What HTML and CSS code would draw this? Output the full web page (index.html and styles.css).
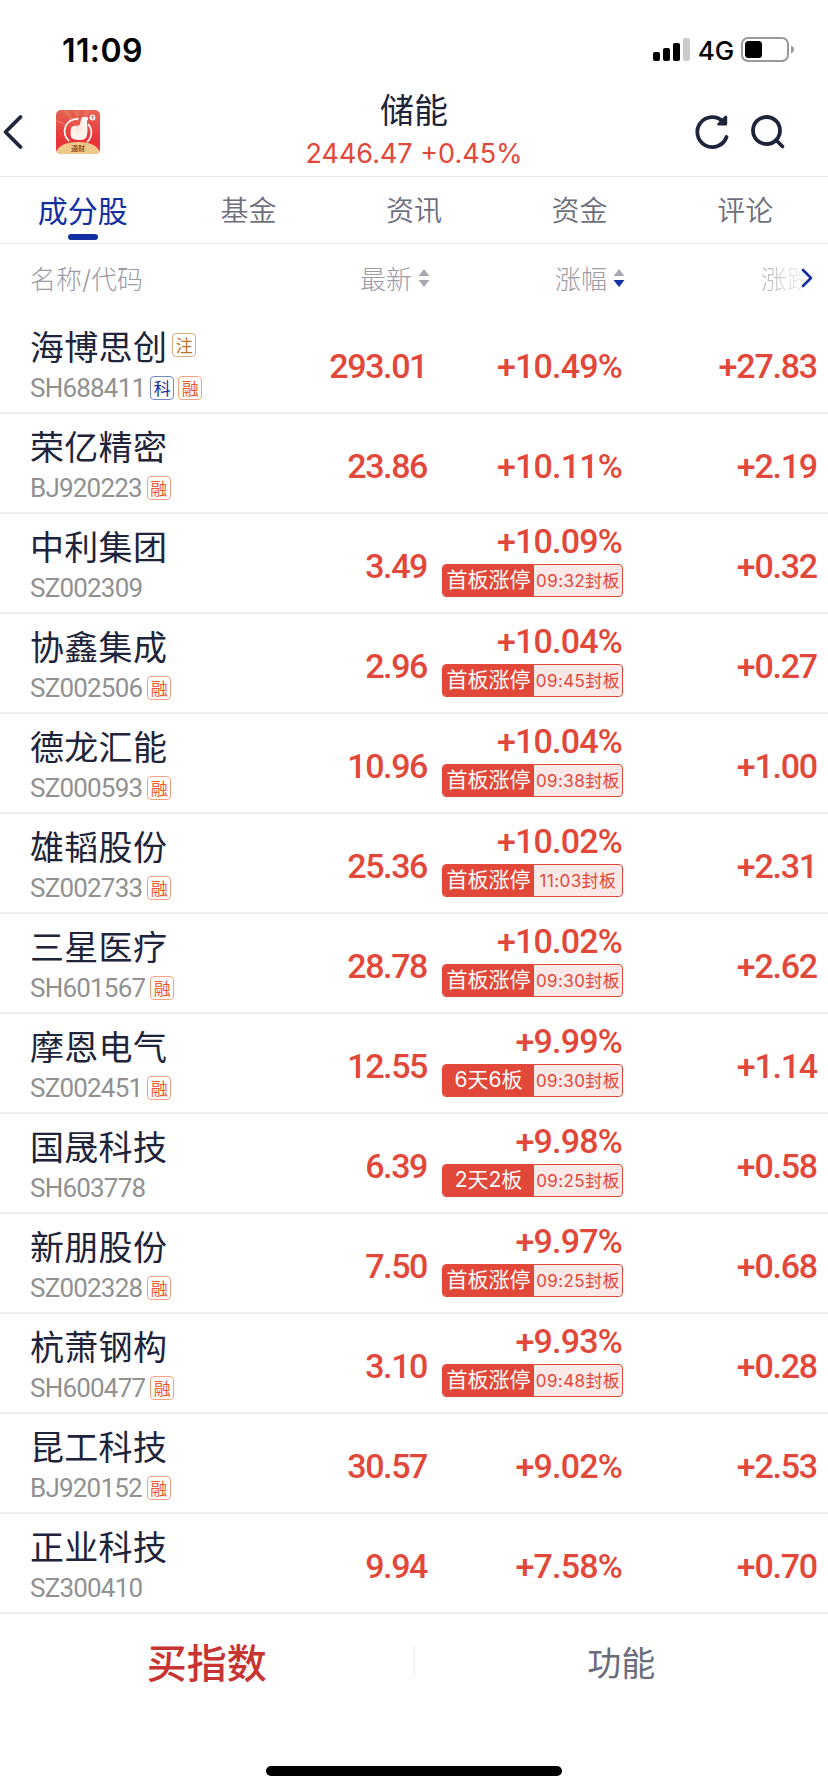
FILE: index.html
```html
<!DOCTYPE html>
<html lang="zh-CN">
<head>
  <meta charset="UTF-8">
  <title>储能</title>
  <link rel="stylesheet" href="styles.css">
</head>
<body>

<div class="status-bar">
  <span class="clock">11:09</span>
  <div class="status-icons">
    <svg width="38" height="24" viewBox="0 0 38 24">
      <rect x="0" y="14" width="7" height="9" rx="2"/>
      <rect x="10" y="10" width="7" height="13" rx="2"/>
      <rect x="20" y="5" width="7" height="18" rx="2"/>
      <rect x="30" y="0" width="7" height="23" rx="2" fill="#ccc"/>
    </svg>
    <span class="network">4G</span>
    <svg width="54" height="26" viewBox="0 0 54 26">
      <rect x="1" y="1" width="46" height="23" rx="6" fill="none" stroke="#999" stroke-width="2"/>
      <rect x="4" y="4" width="17" height="17" rx="3.5"/>
      <path d="M50 8.500c4 1.500 4 6.500 0 8z" fill="#999"/>
    </svg>
  </div>
</div>

<div class="header">
  <div class="header-left">
    <svg class="back" width="26" height="36" viewBox="0 0 26 36">
      <path d="M20.500 3L5.500 18l15 15" fill="none" stroke="#20243a" stroke-width="3.800" stroke-linecap="round" stroke-linejoin="round"/>
    </svg>
    <svg class="logo" width="44" height="44" viewBox="0 0 44 44">
      <defs>
        <linearGradient id="red" x1="0" y1="0" x2="0" y2="1">
          <stop offset="0" stop-color="#e66354"/>
          <stop offset=".7" stop-color="#e93438"/>
        </linearGradient>
        <radialGradient id="hand">
          <stop offset="0" stop-color="#fde6da"/>
          <stop offset="1" stop-color="#fffaf6"/>
        </radialGradient>
        <clipPath id="round"><rect width="44" height="44" rx="5"/></clipPath>
      </defs>
      <g clip-path="url(#round)">
        <rect width="44" height="44" fill="url(#red)"/>
        <path d="M22 20L7 0h5zM22 20L19 0h4zM22 20L30 0h5zM22 20L0 9v3z" fill="#f0866f" opacity=".45"/>
        <path d="M22.500 9A12.500 12.500 0 0 0 13 31M32 14a12.500 12.500 0 0 1-1 18" fill="none" stroke="#fff" stroke-width="1.700"/>
        <path d="M15 18q1-2 4-2.200h3.500q2-1.500 2.200-4.800.3-3.800 3.300-3.900 3-.3 4.300.5 0 1.800-1.300 3.400 0 2.400.2 4.500 1 6-.6 11-1.500 3.500-6.600 3.500-6 0-8.500-2.200-1.200-2-.9-5z" fill="url(#hand)"/>
        <circle cx="36.500" cy="7.500" r="2.900" fill="#fff"/>
        <path d="M36.500 9.300V6M35.200 7l1.300-1.400L37.800 7" stroke="#e8504a" stroke-width=".8" fill="none"/>
        <path d="M0 44q2-12 22-12t22 12z" fill="#eec98a"/>
        <text x="22" y="41" text-anchor="middle" class="logo-text">通财</text>
      </g>
    </svg>
  </div>
  <div class="header-title">
    <div class="title">储能</div>
    <div class="quote">2446.47 +0.45%</div>
  </div>
  <div class="header-right">
    <svg width="38" height="38" viewBox="0 0 38 38" fill="none" stroke="#20243a" stroke-width="3.800" stroke-linecap="round" stroke-linejoin="round">
      <path d="M33.500 24A15 15 0 1 1 30 8.500"/>
      <path d="M32.800 4v7.200h-7.200z" stroke-width="2.800" fill="#20243a"/>
    </svg>
    <svg width="38" height="38" viewBox="0 0 38 38" fill="none" stroke="#20243a" stroke-width="3.800" stroke-linecap="round">
      <circle cx="17.500" cy="17.500" r="13.500"/>
      <path d="M27 27l6.500 6.500"/>
    </svg>
  </div>
</div>

<div class="tabs">
  <div class="tab active">成分股</div>
  <div class="tab">基金</div>
  <div class="tab">资讯</div>
  <div class="tab">资金</div>
  <div class="tab">评论</div>
</div>

<div class="table-head">
  <div class="th-name">名称/代码</div>
  <div class="th">最新
    <svg width="12" height="18" viewBox="0 0 12 18"><path d="M6 0l5.500 7H.5z" fill="#a9a9b1"/><path d="M6 18l5.500-7H.5z" fill="#a9a9b1"/></svg>
  </div>
  <div class="th">涨幅
    <svg width="12" height="18" viewBox="0 0 12 18"><path d="M6 0l5.500 7H.5z" fill="#a9a9b1"/><path d="M6 18l5.500-7H.5z" fill="#142fa2"/></svg>
  </div>
  <div class="th th-last"><span class="fade">涨跌</span>
    <svg class="more" width="14" height="22" viewBox="0 0 14 22"><path d="M3 3l8 8-8 8" fill="none" stroke="#142fa2" stroke-width="2.600" stroke-linecap="round" stroke-linejoin="round"/></svg>
  </div>
</div>

<div class="list">
  <div class="row">
    <div class="stock">
      <div class="name">海博思创<span class="tag gold">注</span></div>
      <div class="code">SH688411<span class="tag blue">科</span><span class="tag">融</span></div>
    </div>
    <div class="num price">293.01</div>
    <div class="num">+10.49%</div>
    <div class="num net">+27.83</div>
  </div>
  <div class="row">
    <div class="stock">
      <div class="name">荣亿精密</div>
      <div class="code">BJ920223<span class="tag">融</span></div>
    </div>
    <div class="num price">23.86</div>
    <div class="num">+10.11%</div>
    <div class="num net">+2.19</div>
  </div>
  <div class="row">
    <div class="stock">
      <div class="name">中利集团</div>
      <div class="code">SZ002309</div>
    </div>
    <div class="num price">3.49</div>
    <div class="num">+10.09%<div class="limit"><b>首板涨停</b><i>09:32封板</i></div></div>
    <div class="num net">+0.32</div>
  </div>
  <div class="row">
    <div class="stock">
      <div class="name">协鑫集成</div>
      <div class="code">SZ002506<span class="tag">融</span></div>
    </div>
    <div class="num price">2.96</div>
    <div class="num">+10.04%<div class="limit"><b>首板涨停</b><i>09:45封板</i></div></div>
    <div class="num net">+0.27</div>
  </div>
  <div class="row">
    <div class="stock">
      <div class="name">德龙汇能</div>
      <div class="code">SZ000593<span class="tag">融</span></div>
    </div>
    <div class="num price">10.96</div>
    <div class="num">+10.04%<div class="limit"><b>首板涨停</b><i>09:38封板</i></div></div>
    <div class="num net">+1.00</div>
  </div>
  <div class="row">
    <div class="stock">
      <div class="name">雄韬股份</div>
      <div class="code">SZ002733<span class="tag">融</span></div>
    </div>
    <div class="num price">25.36</div>
    <div class="num">+10.02%<div class="limit"><b>首板涨停</b><i>11:03封板</i></div></div>
    <div class="num net">+2.31</div>
  </div>
  <div class="row">
    <div class="stock">
      <div class="name">三星医疗</div>
      <div class="code">SH601567<span class="tag">融</span></div>
    </div>
    <div class="num price">28.78</div>
    <div class="num">+10.02%<div class="limit"><b>首板涨停</b><i>09:30封板</i></div></div>
    <div class="num net">+2.62</div>
  </div>
  <div class="row">
    <div class="stock">
      <div class="name">摩恩电气</div>
      <div class="code">SZ002451<span class="tag">融</span></div>
    </div>
    <div class="num price">12.55</div>
    <div class="num">+9.99%<div class="limit"><b>6天6板</b><i>09:30封板</i></div></div>
    <div class="num net">+1.14</div>
  </div>
  <div class="row">
    <div class="stock">
      <div class="name">国晟科技</div>
      <div class="code">SH603778</div>
    </div>
    <div class="num price">6.39</div>
    <div class="num">+9.98%<div class="limit"><b>2天2板</b><i>09:25封板</i></div></div>
    <div class="num net">+0.58</div>
  </div>
  <div class="row">
    <div class="stock">
      <div class="name">新朋股份</div>
      <div class="code">SZ002328<span class="tag">融</span></div>
    </div>
    <div class="num price">7.50</div>
    <div class="num">+9.97%<div class="limit"><b>首板涨停</b><i>09:25封板</i></div></div>
    <div class="num net">+0.68</div>
  </div>
  <div class="row">
    <div class="stock">
      <div class="name">杭萧钢构</div>
      <div class="code">SH600477<span class="tag">融</span></div>
    </div>
    <div class="num price">3.10</div>
    <div class="num">+9.93%<div class="limit"><b>首板涨停</b><i>09:48封板</i></div></div>
    <div class="num net">+0.28</div>
  </div>
  <div class="row">
    <div class="stock">
      <div class="name">昆工科技</div>
      <div class="code">BJ920152<span class="tag">融</span></div>
    </div>
    <div class="num price">30.57</div>
    <div class="num">+9.02%</div>
    <div class="num net">+2.53</div>
  </div>
  <div class="row">
    <div class="stock">
      <div class="name">正业科技</div>
      <div class="code">SZ300410</div>
    </div>
    <div class="num price">9.94</div>
    <div class="num">+7.58%</div>
    <div class="num net">+0.70</div>
  </div>
</div>

<div class="footer">
  <div class="buy">买指数</div>
  <div class="divider"></div>
  <div class="func">功能</div>
</div>
<div class="home-bar"></div>

</body>
</html>
```
FILE: styles.css
```css
* {
  box-sizing: border-box;
}
body {
  margin: 0;
  width: 828px;
  height: 1792px;
  background: #fff;
  color: #20243a;
  font-family: Inter, "Noto Sans CJK SC", sans-serif;
  overflow: hidden;
}
svg {
  display: block;
  flex: none;
}

/* 状态栏 */
.status-bar {
  height: 88px;
  padding: 12px 33px 0 62px;
  display: flex;
  justify-content: space-between;
  align-items: center;
  color: #000;
}
.clock {
  font-size: 32px;
  font-weight: 600;
  letter-spacing: .4px;
}
.status-icons {
  display: flex;
  align-items: center;
}
.network {
  width: 50px;
  text-align: center;
  font-size: 26px;
  font-weight: 500;
}

/* 标题 */
.header {
  height: 89px;
  display: grid;
  grid-template-columns: 1fr 300px 1fr;
  align-items: center;
  border-bottom: 1px solid #e8e8ea;
}
.header-left, .header-right {
  display: flex;
  align-items: center;
}
.header-left {
  gap: 30px;
}
.header-right {
  justify-content: flex-end;
  gap: 18px;
  padding-right: 41px;
}
.logo-text {
  font-size: 7px;
  font-weight: 700;
  fill: #94572b;
}
.header-title {
  text-align: center;
}
.title {
  font-size: 34px;
  line-height: 44px;
}
.quote {
  font-size: 27px;
  line-height: 42px;
  color: #e2483a;
}

/* 标签页 */
.tabs {
  display: flex;
  height: 67px;
  border-bottom: 1px solid #e8e8ea;
}
.tab {
  flex: 1;
  text-align: center;
  font-size: 28px;
  line-height: 68px;
  color: #6d6f7e;
  font-weight: 350;
}
.tab.active {
  font-size: 30px;
  font-weight: 400;
  color: #142fa2;
  position: relative;
}
.tab.active::after {
  content: "";
  position: absolute;
  left: 68px;
  bottom: 3px;
  width: 30px;
  height: 6px;
  border-radius: 3px;
  background: #142fa2;
}

/* 表头 */
.table-head, .row {
  display: grid;
  grid-template-columns: 201px 195px 195px 195px;
  padding-left: 31px;
}
.table-head {
  height: 70px;
  padding-bottom: 3px;
  align-items: center;
  font-size: 26px;
  font-weight: 300;
  color: #9c9ca6;
}
.th-name {
  margin-left: -1px;
}
.th {
  display: flex;
  justify-content: flex-end;
  align-items: center;
  gap: 6px;
  margin-right: -3px;
}
.fade {
  background: linear-gradient(90deg, #b0b0b8, #fff);
  -webkit-background-clip: text;
  background-clip: text;
  color: transparent;
}
.th-last {
  gap: 0;
  margin-right: 0;
  padding-right: 3px;
}
.more {
  margin-left: -13px;
}

/* 股票列表 */
.row {
  height: 100px;
  border-bottom: 2px solid #eeeef0;
  align-items: center;
}
.stock {
  margin-left: -1px;
}
.name {
  display: flex;
  align-items: center;
  height: 48px;
  font-size: 34px;
  letter-spacing: .3px;
}
.code {
  display: flex;
  align-items: center;
  height: 36px;
  padding-top: 2px;
  font-family: Roboto, "Noto Sans CJK SC", sans-serif;
  font-size: 26px;
  letter-spacing: -.8px;
  color: #919191;
}
.tag {
  width: 24px;
  height: 24px;
  margin-left: 5px;
  border: 1px solid #f3a183;
  border-radius: 4px;
  font-family: "Noto Sans CJK SC", sans-serif;
  font-size: 17px;
  line-height: 21px;
  letter-spacing: 0;
  text-align: center;
  color: #ee5a2a;
}
.code .tag + .tag {
  margin-left: 4px;
}
.gold {
  border-color: #d6b184;
  color: #b8762d;
}
.blue {
  border-color: #7385cb;
  color: #142fa2;
}
.num {
  display: flex;
  flex-direction: column;
  align-items: flex-end;
  padding-top: 5px;
  font-family: Roboto, sans-serif;
  font-size: 34px;
  line-height: 40px;
  font-weight: 500;
  letter-spacing: -.8px;
  color: #e2483a;
}
.num:has(.limit) {
  padding: 0 0 9px;
}
.price {
  letter-spacing: -1.4px;
}
.net {
  letter-spacing: -1.2px;
}
.limit {
  display: flex;
  width: 181px;
  height: 33px;
  margin: 3px -1px 0 0;
  border: 1px solid #e2483a;
  border-radius: 4px;
  background: #fbe9e8;
  font-family: Inter, "Noto Sans CJK SC", sans-serif;
  font-weight: 400;
  letter-spacing: 0;
  overflow: hidden;
}
.limit b {
  width: 91px;
  background: #e2483a;
  color: #fff;
  font-size: 21px;
  font-weight: 400;
  line-height: 30px;
  text-align: center;
}
.limit i {
  flex: 1;
  font-size: 17px;
  font-style: normal;
  line-height: 33px;
  letter-spacing: .4px;
  text-align: center;
  white-space: nowrap;
}

/* 底部 */
.footer {
  display: flex;
  align-items: center;
  height: 98px;
  padding-bottom: 4px;
  text-align: center;
}
.buy {
  flex: 1;
  font-size: 40px;
  font-weight: 500;
  color: #c73431;
}
.func {
  flex: 1;
  font-size: 34px;
  color: #6a6c7c;
}
.divider {
  width: 1px;
  height: 32px;
  background: #ececf0;
}
.home-bar {
  width: 296px;
  height: 10px;
  margin: 54px auto 0;
  border-radius: 5px;
  background: #000;
}
```
